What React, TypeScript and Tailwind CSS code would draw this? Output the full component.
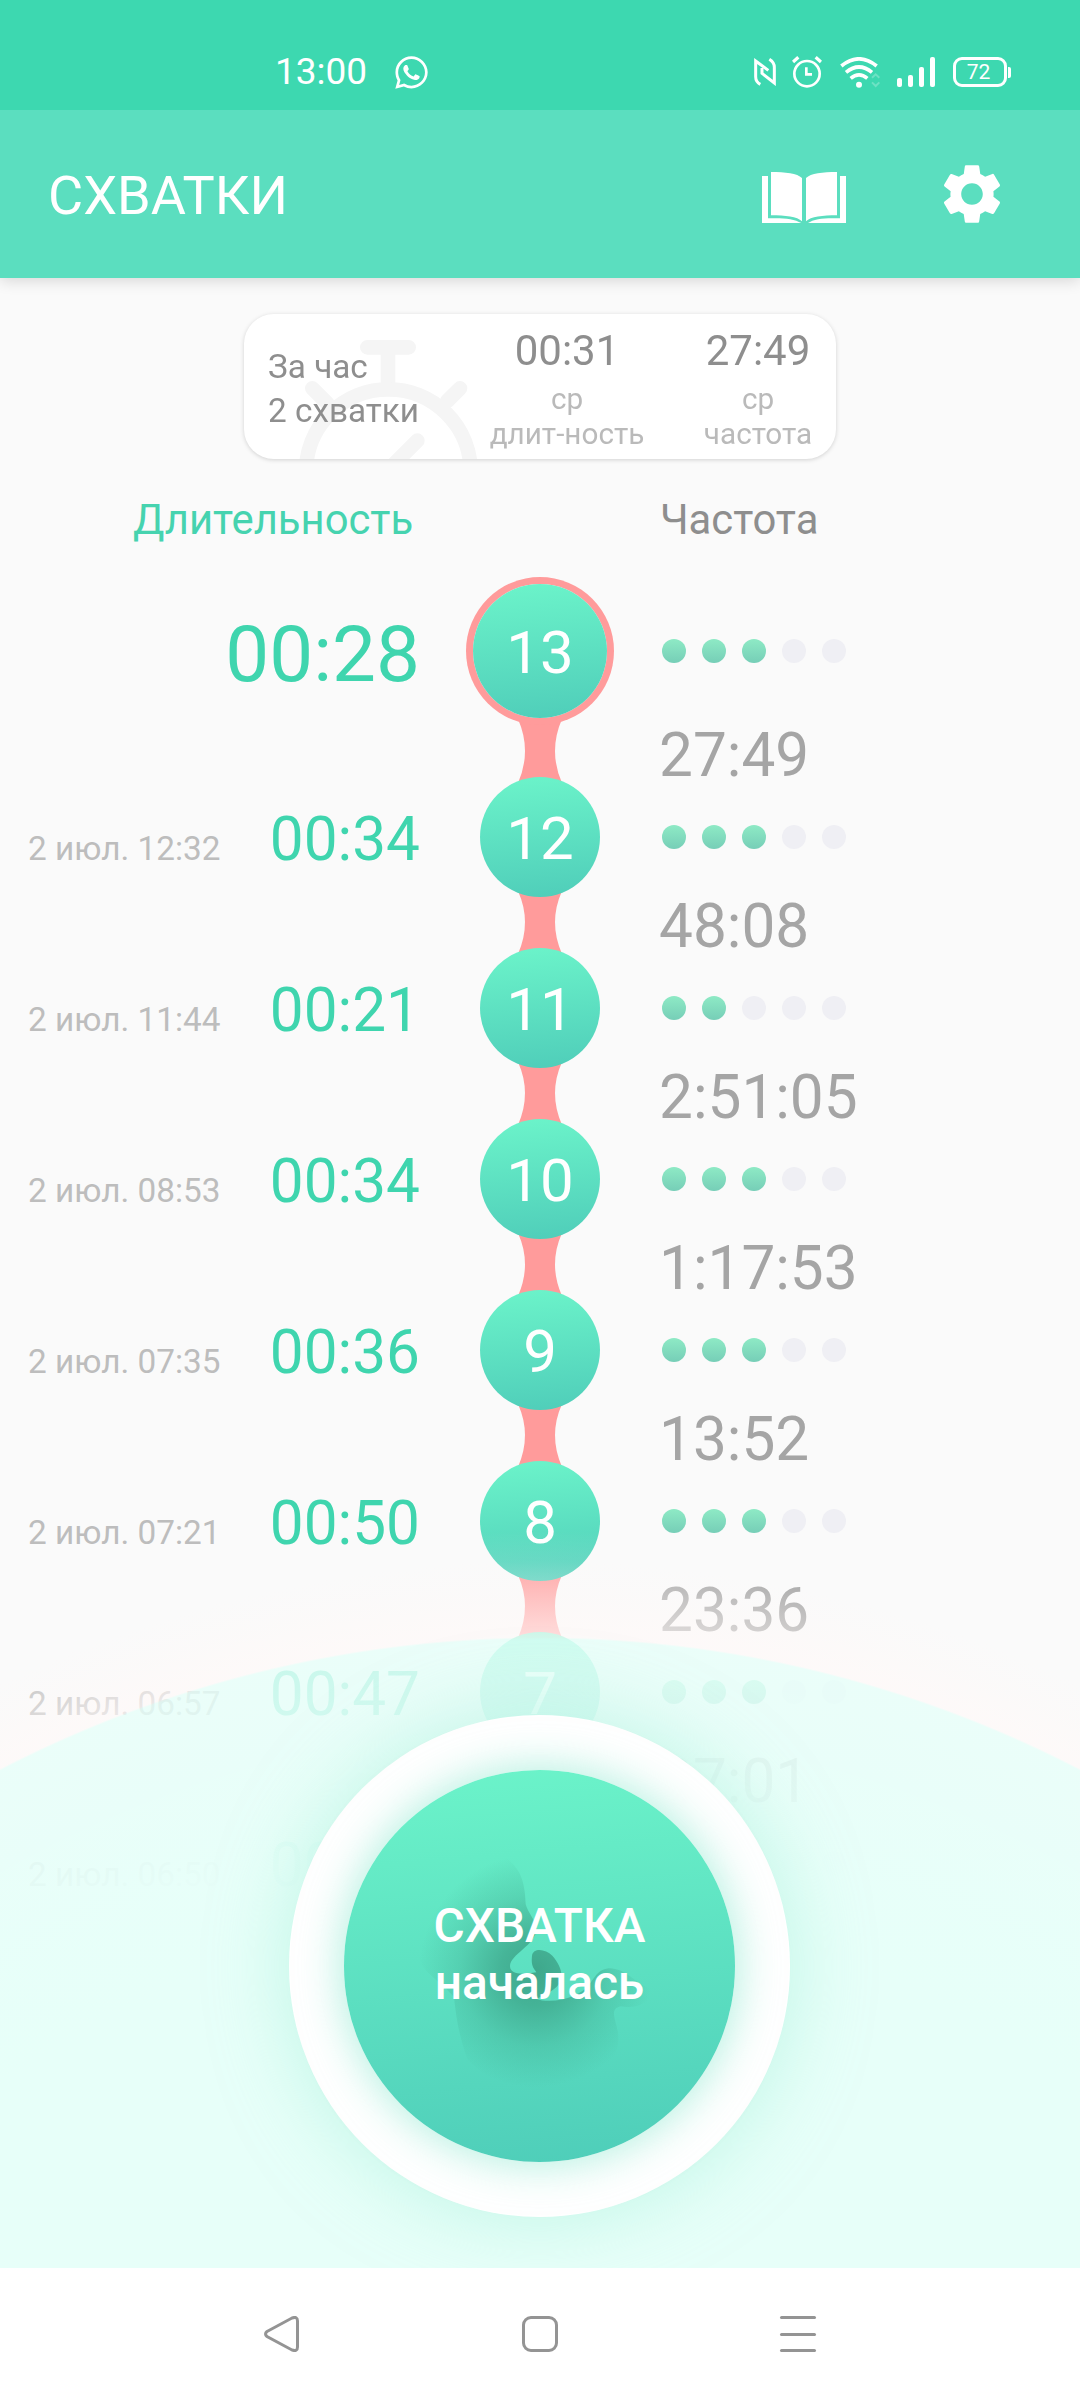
import React from 'react';
import { MdSettings } from 'react-icons/md';
import { FaWhatsapp } from 'react-icons/fa';

interface Contraction {
  id: number;
  date?: string;
  duration: string;
  interval?: string;
  strength: number;
}

const CONTRACTIONS: Contraction[] = [
  { id: 13, duration: '00:28', interval: '27:49', strength: 3 },
  { id: 12, date: '2 июл. 12:32', duration: '00:34', interval: '48:08', strength: 3 },
  { id: 11, date: '2 июл. 11:44', duration: '00:21', interval: '2:51:05', strength: 2 },
  { id: 10, date: '2 июл. 08:53', duration: '00:34', interval: '1:17:53', strength: 3 },
  { id: 9, date: '2 июл. 07:35', duration: '00:36', interval: '13:52', strength: 3 },
  { id: 8, date: '2 июл. 07:21', duration: '00:50', interval: '23:36', strength: 3 },
  { id: 7, date: '2 июл. 06:57', duration: '00:47', interval: '27:01', strength: 3 },
  { id: 6, date: '2 июл. 06:50', duration: '00:41', strength: 3 },
];

function StatusBar() {
  return (
    <div className="relative z-20 h-[110px] bg-[#3dd8b0] text-white flex items-start justify-between pl-[275px] pr-[69px] pt-[56px]">
      <div className="flex items-center h-8">
        <span className="text-[37px] leading-8 w-[120px]">13:00</span>
        <FaWhatsapp className="w-[37px] h-[37px] -ml-[2px]" />
      </div>
      <div className="flex items-center h-8">
        {/* NFC */}
        <svg className="w-[22px] h-[28px]" viewBox="0 0 66 84" fill="none" stroke="#fff" strokeWidth="9">
          <path d="M19 79 Q5 71 5 56 V9 L43 37" />
          <path d="M46 4 Q61 13 61 28 V75 L24 46 V30" />
        </svg>
        {/* Alarm */}
        <svg className="w-[30px] h-[32px] ml-[16px]" viewBox="0 0 90 96" fill="none" stroke="#fff" strokeWidth="8">
          <circle cx="45" cy="53" r="38" />
          <path d="M43 34 V55 H60" />
          <path d="M3 18 L19 4 M71 4 L87 18" strokeWidth="10" />
        </svg>
        {/* Wi-Fi */}
        <svg className="w-[41px] h-[31px] ml-[18px]" viewBox="0 0 123 93" fill="none" stroke="#fff" strokeWidth="11">
          <path d="M4 27 Q57 -16 110 27" />
          <path d="M18 46 Q57 14 96 46" />
          <path d="M32 64 Q57 43 82 64" />
          <circle cx="57" cy="83" r="9" fill="#fff" stroke="none" />
          <path d="M96 62 L107 52 L118 62 M96 76 L107 87 L118 76" strokeOpacity="0.25" strokeWidth="6" />
        </svg>
        {/* Signal */}
        <div className="flex items-end gap-[6px] h-[30px] ml-[16px]">
          <i className="w-[5px] h-[9px] bg-white rounded-[2px]" />
          <i className="w-[5px] h-[12px] bg-white rounded-[2px]" />
          <i className="w-[5px] h-[20px] bg-white rounded-[2px]" />
          <i className="w-[5px] h-[30px] bg-white rounded-[2px]" />
        </div>
        {/* Battery */}
        <div className="flex items-center ml-[18px]">
          <div className="w-[54px] h-[30px] rounded-[9px] border-[3px] border-white flex items-center justify-center pr-[3px] text-[21px] leading-6">
            72
          </div>
          <div className="w-[3px] h-[11px] bg-white rounded-r-[2px] ml-px" />
        </div>
      </div>
    </div>
  );
}

function BookIcon() {
  return (
    <svg className="w-[84px] h-[51px]" viewBox="0 0 252 153" fill="#fff">
      <path d="M0 12 H18 V139 C60 137 96 140 118 153 H0 Z" />
      <path d="M252 12 H234 V139 C192 137 156 140 138 153 H252 Z" />
      <path d="M27 0 C70 0 106 4 120 18 V148 C106 134 70 130 27 130 Z" />
      <path d="M225 0 C182 0 146 4 132 18 V148 C146 134 182 130 225 130 Z" />
    </svg>
  );
}

function AppBar() {
  return (
    <header className="relative z-10 h-[168px] bg-[#5bdebf] text-white flex items-center pl-[48px] pr-[72px] shadow-[0_3px_14px_rgba(0,0,0,0.14)]">
      <h1 className="flex-1 text-[54px] leading-[64px] pt-[4px]">СХВАТКИ</h1>
      <div className="pt-[7px] mr-[90px]">
        <BookIcon />
      </div>
      <MdSettings className="w-[72px] h-[72px]" />
    </header>
  );
}

function Stopwatch() {
  return (
    <svg
      className="absolute left-0 top-0 w-[296px] h-[145px]"
      viewBox="12 12 888 435"
      fill="none"
      stroke="#f5f5f5"
      strokeWidth="44"
      strokeLinecap="round"
    >
      <path d="M382 112 H506 M444 112 V220" />
      <circle cx="445" cy="485" r="247" />
      <path d="M217 235 L262 280 M660 235 L622 273 M532 392 L440 484" />
    </svg>
  );
}

function SummaryCard() {
  return (
    <section className="relative w-[592px] h-[145px] mx-auto bg-white rounded-[30px] overflow-hidden flex text-[#8e8e8e]">
      <Stopwatch />
      <div className="relative w-[240px] pl-[24px] pt-[31px] text-[33.3px] leading-[44px]">
        <div>За час</div>
        <div>2 схватки</div>
      </div>
      <div className="relative w-[166px] pt-[12px] text-center">
        <div className="text-[42px] leading-[49px] mb-[6px]">00:31</div>
        <div className="text-[29.7px] leading-[35px] text-[#bababa]">ср</div>
        <div className="text-[29.7px] leading-[35px] text-[#bababa] whitespace-nowrap">длит-ность</div>
      </div>
      <div className="relative w-[140px] ml-[38px] pt-[12px] text-center">
        <div className="text-[42px] leading-[49px] mb-[6px]">27:49</div>
        <div className="text-[29.7px] leading-[35px] text-[#bababa]">ср</div>
        <div className="text-[29.7px] leading-[35px] text-[#bababa]">частота</div>
      </div>
    </section>
  );
}

function Node({ id, current }: { id: number; current: boolean }) {
  return (
    <div
      className={`relative rounded-full flex items-center justify-center text-white text-[60px] leading-none pt-[4px] bg-linear-[175deg,#6cf4ca,#4fcdb9] ${
        current ? 'w-[134px] h-[134px] m-[7px] ring-[7px] ring-[#ff9b9b]' : 'w-[120px] h-[120px]'
      }`}
    >
      {id}
    </div>
  );
}

function Connector({ current }: { current: boolean }) {
  return (
    <svg
      className={`w-[44px] overflow-visible ${current ? 'h-[52px]' : 'h-[51px]'}`}
      viewBox="0 0 44 52"
      preserveAspectRatio="none"
    >
      <path d="M0 -6 Q14 26 0 58 H44 Q30 26 44 -6 Z" fill="#ff9b9b" />
    </svg>
  );
}

function Dots({ value }: { value: number }) {
  return (
    <div className="flex gap-4">
      {[1, 2, 3, 4, 5].map((n) => (
        <span
          key={n}
          className={`w-6 h-6 rounded-full ${n <= value ? 'bg-linear-to-b from-[#8eeac5] to-[#76ceb7]' : 'bg-[#efeff4]'}`}
        />
      ))}
    </div>
  );
}

function Timeline() {
  return (
    <div className="flex mt-[32px]">
      {/* Dates and durations */}
      <div className="w-[420px]">
        {CONTRACTIONS.map((c, i) =>
          i === 0 ? (
            <div key={c.id} className="h-[177px] pt-[3px] text-right text-[78.2px] leading-[148px] text-[#3fd5ae]">
              {c.duration}
            </div>
          ) : (
            <div key={c.id} className="h-[171px] pl-[28px] flex items-baseline justify-between leading-[171px]">
              <span className="text-[33.3px] text-[#bdbdbd]">{c.date}</span>
              <span className="text-[60.3px] text-[#3fd5ae]">{c.duration}</span>
            </div>
          )
        )}
      </div>

      {/* Chain of numbered circles */}
      <div className="w-[239px] pl-px flex flex-col items-center">
        {CONTRACTIONS.map((c, i) => (
          <React.Fragment key={c.id}>
            <Node id={c.id} current={i === 0} />
            {c.interval && <Connector current={i === 0} />}
          </React.Fragment>
        ))}
      </div>

      {/* Strength and intervals */}
      <div className="flex-1">
        {CONTRACTIONS.map((c, i) => (
          <React.Fragment key={c.id}>
            <div className={`flex items-center pl-[3px] ${i === 0 ? 'h-[148px]' : 'h-[120px]'}`}>
              <Dots value={c.strength} />
            </div>
            {c.interval && (
              <div
                className={`text-[60.3px] leading-[45px] text-[#a5a5a5] ${
                  i === 0 ? 'h-[52px] pt-[8px]' : 'h-[51px] pt-[7px]'
                }`}
              >
                {c.interval}
              </div>
            )}
          </React.Fragment>
        ))}
      </div>
    </div>
  );
}

function Baby() {
  return (
    <svg className="absolute left-[55px] top-[49px] w-[280px] h-[280px]" viewBox="0 0 840 840">
      <defs>
        <radialGradient id="baby" gradientUnits="userSpaceOnUse" cx="410" cy="455" r="350">
          <stop offset="0" stopColor="#37997e" stopOpacity="0.8" />
          <stop offset="0.3" stopColor="#37997e" stopOpacity="0.62" />
          <stop offset="0.65" stopColor="#37997e" stopOpacity="0.24" />
          <stop offset="1" stopColor="#37997e" stopOpacity="0" />
        </radialGradient>
      </defs>
      <path
        fill="url(#baby)"
        d="M325 120 C365 150 378 190 380 255 C385 280 412 305 412 330 C410 380 333 405 333 442 C334 470 375 466 412 460 C402 444 396 440 399 410 C403 385 440 390 460 410 C478 430 490 455 487 475 C484 505 455 520 412 540 C440 550 490 547 530 528 C590 500 580 452 630 448 C690 450 710 500 765 512 C750 555 710 570 665 562 C630 570 650 600 657 640 C663 700 640 740 560 780 C430 830 280 810 205 720 C180 650 172 600 165 535 C130 490 70 460 62 420 C60 250 150 130 325 120 Z"
      />
    </svg>
  );
}

function StartButton() {
  return (
    <button className="absolute left-[289px] top-[1437px] w-[501px] h-[502px] rounded-full bg-white flex items-center justify-center shadow-[0_0_70px_6px_rgba(163,240,218,0.5)]">
      <span className="relative w-[391px] h-[392px] rounded-full flex items-center justify-center bg-linear-[175deg,#6cf4ca,#4ecdb9] shadow-[0_0_44px_2px_rgba(110,225,195,0.55)]">
        <Baby />
        <span className="relative text-white text-[47.8px] leading-[57px] font-medium -mt-[22px]">
          СХВАТКА
          <br />
          началась
        </span>
      </span>
    </button>
  );
}

function NavBar() {
  return (
    <nav className="h-[132px] bg-white flex items-center justify-between px-[264px] text-[#949494]">
      <svg className="w-[36px] h-[36px]" viewBox="0 0 36 36" fill="none" stroke="currentColor" strokeWidth="3">
        <path d="M3 15.5 L28 2 Q33.500 0 33.500 5 V31 Q33.500 36 28 34 L3 20.500 Q0 18 3 15.500 Z" />
      </svg>
      <div className="w-[36px] h-[36px] rounded-[9px] border-[3px] border-current" />
      <div className="w-[36px] h-[36px] flex flex-col justify-between">
        <i className="h-[3px] bg-current rounded-full" />
        <i className="h-[3px] bg-current rounded-full" />
        <i className="h-[3px] bg-current rounded-full" />
      </div>
    </nav>
  );
}

export default function App() {
  return (
    <div className="w-[1080px] h-[2400px] flex flex-col overflow-hidden bg-[#fafafa] font-['Roboto',sans-serif]">
      <StatusBar />
      <AppBar />
      <main className="relative flex-1 min-h-0 overflow-hidden pt-[36px]">
        <div className="drop-shadow-[0_1px_2px_rgba(0,0,0,0.16)]">
          <SummaryCard />
        </div>
        <div className="flex mt-[36px] text-[41.8px] leading-[50px]">
          <div className="w-[660px] pl-[133px] text-[#46d3af]">Длительность</div>
          <div className="text-[#8e8e8e]">Частота</div>
        </div>
        <Timeline />

        {/* Rounded hill that fades out the end of the list */}
        <div className="absolute inset-0 bg-[radial-gradient(circle_at_540px_2533px,#e7fff9_900px,rgba(231,255,249,0.98)_980px,rgba(231,255,249,0.9)_1080px,rgba(231,255,249,0.82)_1172px,rgba(255,249,248,0.7)_1174px,rgba(253,249,248,0.4)_1215px,rgba(250,250,250,0.12)_1250px,rgba(250,250,250,0)_1280px)]" />
        <StartButton />
      </main>
      <NavBar />
    </div>
  );
}
